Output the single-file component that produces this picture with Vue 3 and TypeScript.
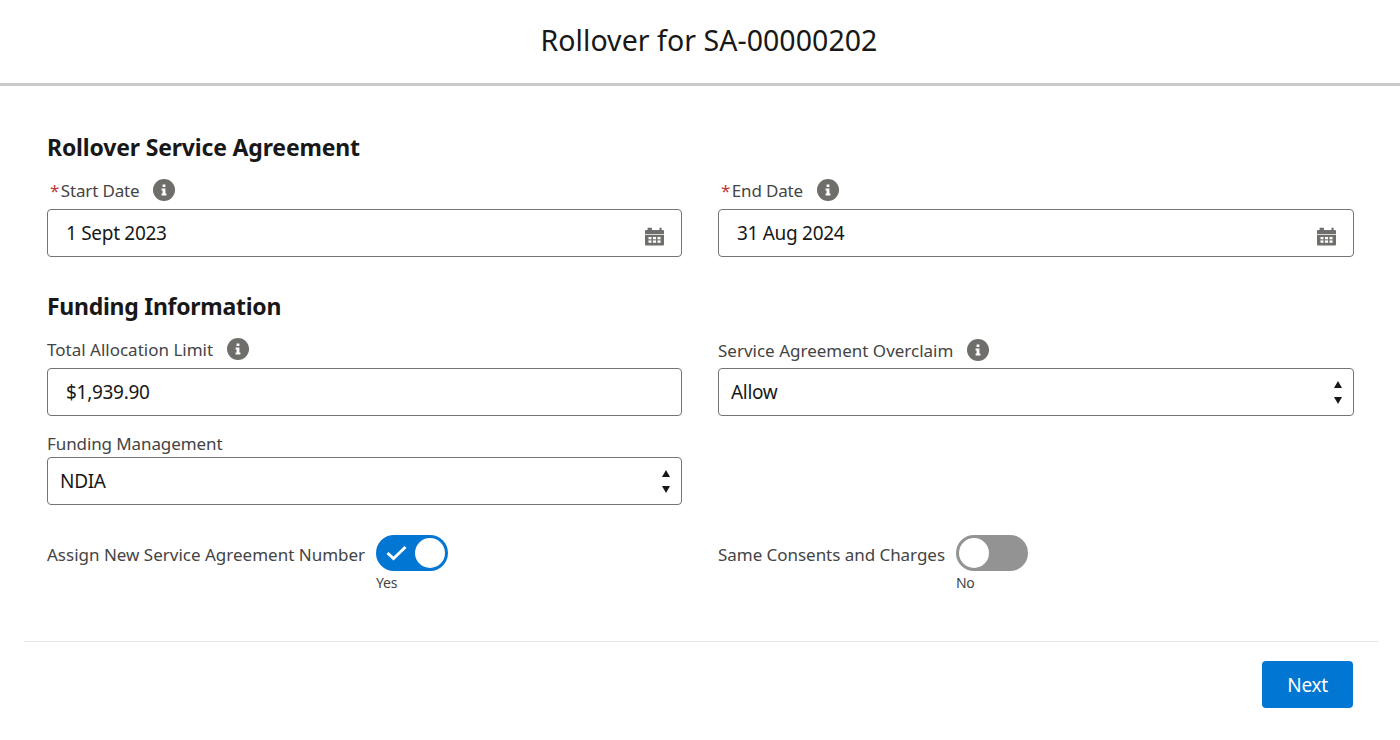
<script setup lang="ts">
const calendarPath = 'M4 1h1.800v2h6.400V1H14v2h1.200c.5 0 .8.3.8.8V6.300H0V3.800c0-.5.3-.8.8-.8H2.200V1zM0 7h16v8.200c0 .5-.3.8-.8.8H.8c-.5 0-.8-.3-.8-.8V7z'
const holes = [
  [2.900, 8.800], [6.700, 8.800], [10.500, 8.800],
  [2.900, 11.700], [6.700, 11.700], [10.500, 11.700],
]
</script>

<template>
  <div class="page">
    <header class="header"><h1>Rollover for SA-00000202</h1></header>
    <main class="form">
      <h2 class="section first">Rollover Service Agreement</h2>
      <div class="row dates">
        <div class="field">
          <div class="label"><span class="req">*</span><span>Start Date</span>
            <svg class="info" viewBox="0 0 22 22"><circle cx="11" cy="11" r="11" /><path d="M9.600 5.500h2.800v2.600H9.600zM8.600 9.500h3.800v5h1v1.900H8.600v-1.900h1v-3.100h-1z" /></svg>
          </div>
          <div class="box"><span class="val">1 Sept 2023</span>
            <svg class="cal" viewBox="0 0 16 16"><path :d="calendarPath" /><rect v-for="(h, i) in holes" :key="i" class="hole" :x="h[0]" :y="h[1]" width="2.600" height="2" /></svg>
          </div>
        </div>
        <div class="field">
          <div class="label"><span class="req">*</span><span>End Date</span>
            <svg class="info" viewBox="0 0 22 22"><circle cx="11" cy="11" r="11" /><path d="M9.600 5.500h2.800v2.600H9.600zM8.600 9.500h3.800v5h1v1.900H8.600v-1.900h1v-3.100h-1z" /></svg>
          </div>
          <div class="box"><span class="val">31 Aug 2024</span>
            <svg class="cal" viewBox="0 0 16 16"><path :d="calendarPath" /><rect v-for="(h, i) in holes" :key="i" class="hole" :x="h[0]" :y="h[1]" width="2.600" height="2" /></svg>
          </div>
        </div>
      </div>

      <h2 class="section second">Funding Information</h2>
      <div class="row funding">
        <div class="field">
          <div class="label"><span>Total Allocation Limit</span>
            <svg class="info" viewBox="0 0 22 22"><circle cx="11" cy="11" r="11" /><path d="M9.600 5.500h2.800v2.600H9.600zM8.600 9.500h3.800v5h1v1.900H8.600v-1.900h1v-3.100h-1z" /></svg>
          </div>
          <div class="box"><span class="val">$1,939.90</span></div>
        </div>
        <div class="field">
          <div class="label low"><span>Service Agreement Overclaim</span>
            <svg class="info" viewBox="0 0 22 22"><circle cx="11" cy="11" r="11" /><path d="M9.600 5.500h2.800v2.600H9.600zM8.600 9.500h3.800v5h1v1.900H8.600v-1.900h1v-3.100h-1z" /></svg>
          </div>
          <div class="box select"><span class="val">Allow</span>
            <span class="arrows"><i class="up"></i><i class="down"></i></span>
          </div>
        </div>
      </div>
      <div class="row mgmt">
        <div class="field">
          <div class="label plain">Funding Management</div>
          <div class="box select"><span class="val">NDIA</span>
            <span class="arrows"><i class="up"></i><i class="down"></i></span>
          </div>
        </div>
        <div class="field"></div>
      </div>

      <div class="row toggles">
        <div class="toggle-field">
          <span class="toggle-label">Assign New Service Agreement Number</span>
          <div class="toggle-col">
            <span class="track on">
              <svg class="check" viewBox="0 0 20 16"><path d="M1 8l6 5.500L19 2" /></svg>
              <span class="knob"></span>
            </span>
            <span class="state">Yes</span>
          </div>
        </div>
        <div class="toggle-field">
          <span class="toggle-label tight">Same Consents and Charges</span>
          <div class="toggle-col">
            <span class="track off"><span class="knob"></span></span>
            <span class="state">No</span>
          </div>
        </div>
      </div>
    </main>
    <footer class="footer">
      <button class="next" type="button">Next</button>
    </footer>
  </div>
</template>

<style>
html, body { margin: 0; background: #fff; }
</style>

<style scoped>
.page {
  position: relative;
  width: 1400px;
  height: 740px;
  overflow: hidden;
  background: #fff;
  font-family: "Noto Sans", "Open Sans", "Liberation Sans", sans-serif;
  color: #181818;
}
.header {
  height: 80px;
  border-bottom: 3px solid #c9c9c9;
  display: flex;
  align-items: center;
  justify-content: center;
  padding-left: 18px;
  padding-bottom: 3px;
}
.header h1 {
  margin: 0;
  font-size: 28.500px;
  font-weight: 400;
  letter-spacing: 0.05px;
  line-height: 36px;
}
.form { padding: 0 46px 0 47px; }
.section {
  margin: 0;
  font-size: 23px;
  font-weight: 700;
  line-height: 30px;
  letter-spacing: -0.17px;
  color: #181818;
}
.section.first { padding-top: 46px; }
.section.second { padding-top: 34px; letter-spacing: -0.27px; }
.row { display: grid; grid-template-columns: 635px 636px; column-gap: 36px; }
.label {
  display: flex;
  align-items: center;
  height: 38px;
  font-size: 17px;
  color: #444;
}
.dates { margin-top: 9px; }
.dates .label { padding-left: 3px; letter-spacing: -0.15px; }
.funding { margin-top: 9px; }
.funding .label.low { padding-top: 2px; height: 36px; }
.req { color: #c23934; margin-right: 1.500px; }
.info {
  width: 22px;
  height: 22px;
  margin-left: 14px;
  fill: #706e6b;
  flex: none;
}
.info path { fill: #fff; }
.box {
  box-sizing: border-box;
  height: 48px;
  border: 1px solid #747474;
  border-radius: 4px;
  display: flex;
  align-items: center;
  justify-content: space-between;
  padding: 0 17px 0 18px;
  background: #fff;
}
.box.select { padding: 0 11px 0 12px; }
.val { font-size: 19px; letter-spacing: -0.3px; color: #181818; }
.cal { width: 19px; height: 20px; fill: #706e6b; margin-top: 5px; }
.hole { fill: #fff; }
.arrows { display: flex; flex-direction: column; gap: 9px; align-items: center; }
.up, .down { display: block; width: 0; height: 0; border-left: 4px solid transparent; border-right: 4px solid transparent; }
.up { border-bottom: 7px solid #181818; }
.down { border-top: 7px solid #181818; }
.mgmt { margin-top: 13px; }
.mgmt .label { height: 28px; letter-spacing: -0.1px; }
.toggles { margin-top: 30px; }
.toggle-field { display: flex; align-items: flex-start; }
.toggle-label {
  font-size: 17px;
  color: #444;
  line-height: 22px;
  margin-top: 9px;
  margin-right: 11px;
}
.toggle-label.tight { letter-spacing: -0.04px; }
.toggle-col { display: flex; flex-direction: column; align-items: flex-start; }
.track {
  position: relative;
  display: block;
  width: 72px;
  height: 36px;
  border-radius: 18px;
}
.track.on { background: #0176d3; }
.track.off { background: #939393; }
.knob {
  position: absolute;
  top: 3px;
  width: 30px;
  height: 30px;
  border-radius: 50%;
  background: #fff;
}
.on .knob { right: 3px; }
.off .knob { left: 3px; }
.check {
  position: absolute;
  left: 10px;
  top: 10px;
  width: 21px;
  height: 16px;
  fill: none;
  stroke: #fff;
  stroke-width: 3;
}
.state {
  font-size: 14px;
  line-height: 20px;
  letter-spacing: -0.3px;
  color: #444;
  margin-top: 2px;
}
.footer {
  position: absolute;
  left: 24px;
  top: 641px;
  width: 1354px;
  border-top: 1px solid #e5e5e5;
  display: flex;
  justify-content: flex-end;
  padding-top: 19px;
  padding-right: 25px;
  box-sizing: border-box;
}
.next {
  width: 91px;
  height: 47px;
  border: 0;
  border-radius: 4px;
  background: #0176d3;
  color: #fff;
  font-family: inherit;
  font-size: 19px;
  letter-spacing: -0.3px;
}
</style>
